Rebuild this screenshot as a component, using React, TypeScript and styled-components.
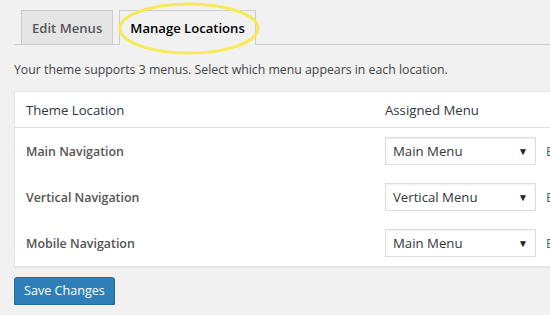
import styled, { createGlobalStyle } from 'styled-components'

const GlobalStyle = createGlobalStyle`
  html, body {
    margin: 0;
    padding: 0;
    background: #f1f1f1;
    overflow: hidden;
  }
  body {
    font-family: 'Open Sans', 'Noto Sans', sans-serif;
    font-size: 12.3px;
    color: #444;
  }
`

const locations = [
  { name: 'Main Navigation', menu: 'Main Menu' },
  { name: 'Vertical Navigation', menu: 'Vertical Menu' },
  { name: 'Mobile Navigation', menu: 'Main Menu' },
]

const App = () => {
  return (
    <>
      <GlobalStyle />
      <Wrap>
        <TabBar>
          <Tab>Edit Menus</Tab>
          <Tab $active>
            Manage Locations
            <Highlight viewBox="0 0 142 53" aria-hidden="true">
              <ellipse cx="71" cy="26.5" rx="69" ry="24.5" fill="none" stroke="#f6ea55" strokeWidth="3" />
            </Highlight>
          </Tab>
        </TabBar>
        <Intro>Your theme supports 3 menus. Select which menu appears in each location.</Intro>
        <Table>
          <HeadRow>
            <LocationCell>Theme Location</LocationCell>
            <MenuCell>Assigned Menu</MenuCell>
          </HeadRow>
          {locations.map((loc) => (
            <Row key={loc.name}>
              <LocationCell $bold>{loc.name}</LocationCell>
              <MenuCell>
                <SelectBox>
                  <span>{loc.menu}</span>
                  <Arrow>▼</Arrow>
                </SelectBox>
                <EditLink>Edit</EditLink>
              </MenuCell>
            </Row>
          ))}
        </Table>
        <SaveButton>Save Changes</SaveButton>
      </Wrap>
    </>
  )
}

const Wrap = styled.div`
  padding: 10px 0 0 14px;
  width: 600px;
`

const TabBar = styled.div`
  display: flex;
  gap: 6px;
  padding-left: 7px;
  border-bottom: 1px solid #ccc;
  height: 35px;
  box-sizing: border-box;
`

const Tab = styled.div<{ $active?: boolean }>`
  position: relative;
  display: flex;
  align-items: center;
  height: ${(p) => (p.$active ? '35px' : '34px')};
  padding: 0 10px;
  box-sizing: border-box;
  border: 1px solid #ccc;
  border-bottom: none;
  background: ${(p) => (p.$active ? '#f1f1f1' : '#e5e5e5')};
  color: ${(p) => (p.$active ? '#000' : '#555')};
  font-size: 13.1px;
  font-weight: 600;
  line-height: 24px;
`

const Highlight = styled.svg`
  position: absolute;
  left: -2px;
  top: -9px;
  width: 142px;
  height: 53px;
  pointer-events: none;
`

const Intro = styled.p`
  margin: 15px 0 0;
  line-height: 19px;
`

const Table = styled.div`
  margin-top: 12px;
  background: #fff;
  border: 1px solid #e5e5e5;
  box-shadow: 0 1px 1px rgba(0, 0, 0, 0.04);
`

const HeadRow = styled.div`
  display: flex;
  align-items: center;
  height: 35px;
  border-bottom: 1px solid #e1e1e1;
  color: #32373c;
  font-size: 13.2px;
`

const Row = styled.div`
  display: flex;
  align-items: center;
  height: 46px;
`

const LocationCell = styled.div<{ $bold?: boolean }>`
  width: 370px;
  padding-left: 11px;
  box-sizing: border-box;
  font-weight: ${(p) => (p.$bold ? 600 : 400)};
  font-size: ${(p) => (p.$bold ? '12.4px' : '13.2px')};
  color: ${(p) => (p.$bold ? '#555' : '#32373c')};
`

const MenuCell = styled.div`
  display: flex;
  align-items: center;
  gap: 10px;
`

const SelectBox = styled.div`
  display: flex;
  align-items: center;
  justify-content: space-between;
  width: 151px;
  height: 28px;
  box-sizing: border-box;
  padding: 0 7px 0 7px;
  border: 1px solid #ddd;
  box-shadow: inset 0 1px 2px rgba(0, 0, 0, 0.07);
  background: #fff;
  color: #32373c;
  font-size: 13.2px;
`

const Arrow = styled.span`
  font-size: 10px;
  color: #222;
`

const EditLink = styled.a`
  color: #0073aa;
  font-size: 12.3px;
`

const SaveButton = styled.button`
  margin-top: 10px;
  height: 28px;
  padding: 0 9px;
  background: #2e7fb8;
  border: 1px solid #1f6aa0;
  border-radius: 3px;
  box-shadow: 0 1px 0 #1a5d8c;
  color: #fff;
  font-family: inherit;
  font-size: 12.6px;
  line-height: 26px;
`

export default App
